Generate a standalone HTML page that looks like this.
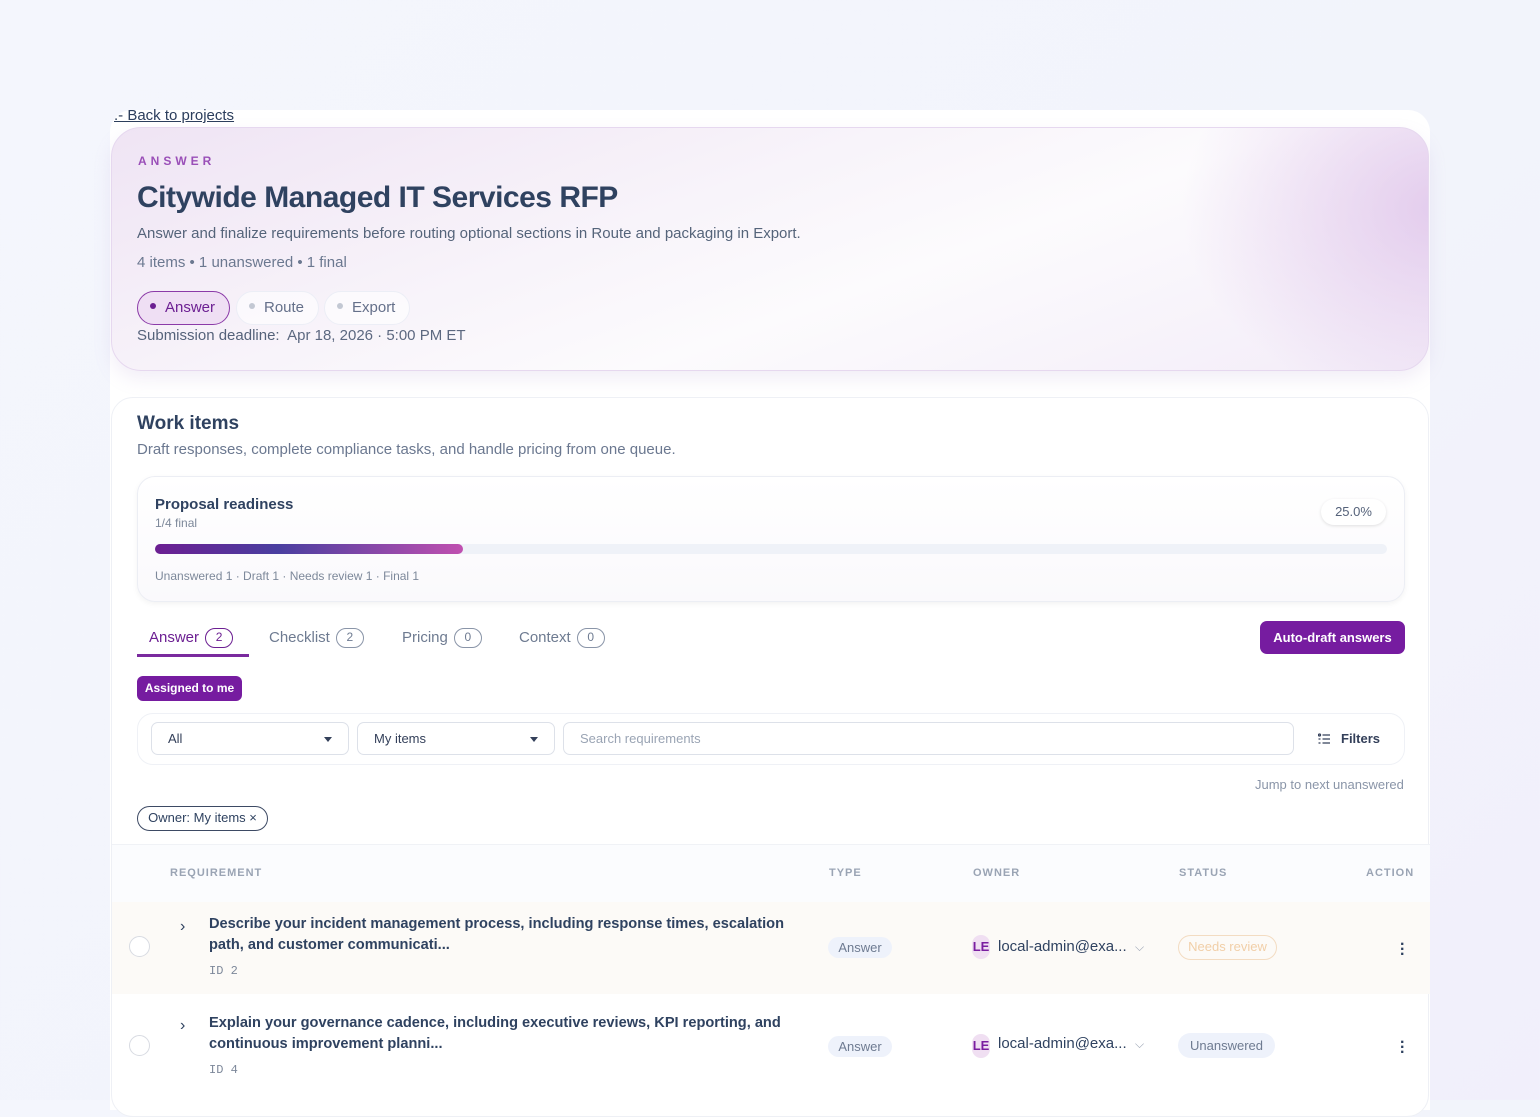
<!DOCTYPE html>
<html><head><meta charset="utf-8"><style>
*{box-sizing:border-box;margin:0;padding:0}
body{width:1540px;height:1100px;overflow:hidden;background:linear-gradient(135deg,#f4f6fd 0%,#f2f4fb 60%,#f1effb 100%);font-family:"Liberation Sans",sans-serif;color:#334766;position:relative}
.shell{position:absolute;left:110px;top:110px;width:1320px;height:1000px;background:#fff;border-radius:22px 22px 0 0}
.back{position:absolute;left:114px;top:107px;font-size:15px;color:#2c3e5c;text-decoration:underline}
.hero{position:absolute;left:111px;top:127px;width:1318px;height:244px;border-radius:30px;border:1px solid #e6d8ef;background:radial-gradient(ellipse 260px 200px at 1330px 80px,rgba(220,190,232,.75),rgba(255,255,255,0) 100%),linear-gradient(160deg,#efe4f4 0%,#f8f4fa 40%,#fcfbfd 60%,#f3ecf8 100%);box-shadow:0 8px 18px rgba(170,140,200,.15)}
.abs{position:absolute}
.eyebrow{left:26px;top:26px;font-size:12px;letter-spacing:4px;font-weight:bold;color:#9a4fb8}
.title{left:25px;top:53px;font-size:30px;font-weight:bold;color:#2f4260;letter-spacing:-.5px}
.sub{left:25px;top:97px;font-size:15px;color:#55647a}
.meta{left:25px;top:126px;font-size:15px;color:#6b7890}
.pill{position:absolute;top:163px;height:34px;border-radius:17px;border:1px solid #eceef6;background:rgba(255,255,255,.6);font-size:15px;color:#65708a;padding:0 14px 0 12px;line-height:32px}
.pill i{display:inline-block;width:6px;height:6px;border-radius:50%;background:#c3c8d3;margin-right:9px;vertical-align:middle;position:relative;top:-2px}
.pill.on{border:1.5px solid #8b3aa8;background:#efdff4;color:#6c1f92}
.pill.on i{background:#6c1f92}
.dead{left:25px;top:199px;font-size:15px;color:#5c6880}
.work{position:absolute;left:111px;top:397px;width:1318px;height:720px;border-radius:22px;border:1px solid #eef0f5;background:#fff}
.card{position:absolute;left:25px;top:78px;width:1268px;height:126px;border-radius:18px;border:1px solid #eceef4;background:linear-gradient(180deg,#fff,#faf9fc);box-shadow:0 2px 6px rgba(0,0,0,.05)}
.bar{position:absolute;left:17px;top:67px;width:1232px;height:10px;border-radius:5px;background:#eff2f8}
.bar b{display:block;width:308px;height:10px;border-radius:5px;background:linear-gradient(90deg,#6c1f92,#4a3fa0 40%,#c050b0)}
.tab{position:absolute;top:230px;font-size:15px;color:#6e7b91}
.tab span{display:inline-block;min-width:28px;height:20px;border:1.5px solid #8a95a8;border-radius:10px;text-align:center;font-size:12px;line-height:17px;margin-left:6px;vertical-align:1px}
.sel{border:1px solid #dde1e9;border-radius:7px;position:absolute;top:8px;height:33px;font-size:13px;line-height:31px;padding-left:16px;color:#34405a;background:#fff}
.dd:after{content:"";position:absolute;right:16px;top:14px;border:4px solid transparent;border-top:5px solid #34405a}
.th{position:absolute;top:22px;font-size:11px;font-weight:bold;letter-spacing:1px;color:#9aa4b4}
.row{position:absolute;left:0;width:1318px;height:92px}
.rad{position:absolute;left:17px;width:21px;height:21px;border-radius:50%;border:1.5px solid #d8dbe2;background:#fff}
.q{position:absolute;left:97px;font-size:14.6px;font-weight:bold;color:#2f4260;line-height:21px;width:600px}
.id{position:absolute;left:97px;font-family:"Liberation Mono",monospace;font-size:12px;color:#7d889a}
.type{position:absolute;left:716px;width:64px;height:21px;border-radius:11px;background:#eef2fb;font-size:13px;color:#6e7b91;text-align:center;line-height:21px}
.av{position:absolute;left:860px;width:18px;height:24px;border-radius:9px;background:#f0dff2;color:#7a1ea0;font-size:13px;font-weight:bold;text-align:center;line-height:24px}
.own{position:absolute;left:886px;font-size:15px;color:#2f4260}
.dots{position:absolute;left:1288px;font-size:16px;color:#2f4260;font-weight:bold;line-height:5px;width:4px}
</style></head><body>
<div class="shell"></div>
<div class="back">.- Back to projects</div>
<div class="hero">
<div class="abs eyebrow">ANSWER</div>
<div class="abs title">Citywide Managed IT Services RFP</div>
<div class="abs sub">Answer and finalize requirements before routing optional sections in Route and packaging in Export.</div>
<div class="abs meta">4 items • 1 unanswered • 1 final</div>
<div class="pill on" style="left:25px"><i></i>Answer</div>
<div class="pill" style="left:124px"><i></i>Route</div>
<div class="pill" style="left:212px"><i></i>Export</div>
<div class="abs dead"><b style="font-weight:normal;color:#55627a">Submission deadline:</b>&nbsp; Apr 18, 2026 · 5:00 PM ET</div>
</div>
<div class="work">
<div class="abs" style="left:25px;top:15px;font-size:19px;font-weight:bold;color:#2f4260">Work items</div>
<div class="abs" style="left:25px;top:43px;font-size:15px;color:#6b7890">Draft responses, complete compliance tasks, and handle pricing from one queue.</div>
<div class="card">
<div class="abs" style="left:17px;top:19px;font-size:15px;font-weight:bold;color:#2f4260">Proposal readiness</div>
<div class="abs" style="left:17px;top:39px;font-size:12px;color:#7d889a">1/4 final</div>
<div class="abs" style="left:1183px;top:22px;width:65px;height:26px;border-radius:13px;background:#fff;box-shadow:0 1px 3px rgba(0,0,0,.12);font-size:13px;color:#55627a;text-align:center;line-height:26px">25.0%</div>
<div class="bar"><b></b></div>
<div class="abs" style="left:17px;top:92px;font-size:12px;color:#7d889a">Unanswered 1 · Draft 1 · Needs review 1 · Final 1</div>
</div>
<div class="tab" style="left:37px;color:#6c1f92">Answer<span style="border-color:#6c1f92">2</span></div>
<div class="abs" style="left:25px;top:256px;width:112px;height:3px;background:#7a2a9e"></div>
<div class="tab" style="left:157px">Checklist<span>2</span></div>
<div class="tab" style="left:290px">Pricing<span>0</span></div>
<div class="tab" style="left:407px">Context<span>0</span></div>
<div class="abs" style="left:1148px;top:223px;width:145px;height:33px;border-radius:7px;background:#761ca0;color:#fff;font-size:13px;font-weight:bold;text-align:center;line-height:33px">Auto-draft answers</div>
<div class="abs" style="left:25px;top:278px;width:105px;height:25px;border-radius:6px;background:#761ca0;color:#fff;font-size:12px;font-weight:bold;text-align:center;line-height:25px">Assigned to me</div>
<div class="abs" style="left:25px;top:315px;width:1268px;height:52px;border:1px solid #eff1f6;border-radius:16px">
<div class="sel dd" style="left:13px;width:198px">All</div>
<div class="sel dd" style="left:219px;width:198px">My items</div>
<div class="sel" style="left:425px;width:731px;color:#9aa4b4">Search requirements</div>
<svg class="abs" style="left:1180px;top:19px" width="12" height="12" viewBox="0 0 12 12" fill="none" stroke="#34405a" stroke-width="1.3"><circle cx="1.5" cy="2" r="1"/><path d="M4.5 2H12M4.5 6H12M4.5 10H12M0.5 6h2M0.5 10h2"/></svg>
<div class="abs" style="left:1203px;top:17px;font-size:13px;font-weight:bold;color:#34405a">Filters</div>
</div>
<div class="abs" style="left:1143px;top:379px;font-size:13px;color:#8a95a8">Jump to next unanswered</div>
<div class="abs" style="left:25px;top:408px;width:131px;height:25px;border:1.5px solid #3d4a64;border-radius:13px;font-size:13px;color:#2f4260;text-align:center;line-height:22px">Owner: My items ×</div>
<div class="abs" style="left:0;top:446px;width:1318px;height:58px;background:#fbfcfe;border-top:1px solid #f0f2f6">
<div class="th" style="left:58px">REQUIREMENT</div><div class="th" style="left:717px">TYPE</div><div class="th" style="left:861px">OWNER</div><div class="th" style="left:1067px">STATUS</div><div class="th" style="left:1254px">ACTION</div>
</div>
<div class="row" style="top:504px;background:#fcfaf7">
<div class="rad" style="top:34px"></div>
<div class="abs" style="left:68px;top:16px;font-size:16px;color:#2f4260">›</div>
<div class="q" style="top:12px">Describe your incident management process, including response times, escalation path, and customer communicati...</div>
<div class="id" style="top:62px">ID 2</div>
<div class="type" style="top:35px">Answer</div>
<div class="av" style="top:33px">LE</div>
<div class="own" style="top:36px">local-admin@exa... &nbsp;<span style="color:#9aa4b4;font-size:12px">⌵</span></div>
<div class="abs" style="left:1066px;top:33px;width:99px;height:25px;border:1.5px solid #f3dcc2;border-radius:13px;font-size:13px;color:#f1cfa8;text-align:center;line-height:22px">Needs review</div>
<div class="dots" style="top:40px">·<br>·<br>·</div>
</div>
<div class="row" style="top:596px">
<div class="rad" style="top:41px"></div>
<div class="abs" style="left:68px;top:23px;font-size:16px;color:#2f4260">›</div>
<div class="q" style="top:19px">Explain your governance cadence, including executive reviews, KPI reporting, and continuous improvement planni...</div>
<div class="id" style="top:69px">ID 4</div>
<div class="type" style="top:42px">Answer</div>
<div class="av" style="top:40px">LE</div>
<div class="own" style="top:41px">local-admin@exa... &nbsp;<span style="color:#9aa4b4;font-size:12px">⌵</span></div>
<div class="abs" style="left:1066px;top:39px;width:97px;height:25px;border-radius:13px;background:#eef2fb;font-size:13px;color:#6e7b91;text-align:center;line-height:25px">Unanswered</div>
<div class="dots" style="top:46px">·<br>·<br>·</div>
</div>
</div>
</body></html>
